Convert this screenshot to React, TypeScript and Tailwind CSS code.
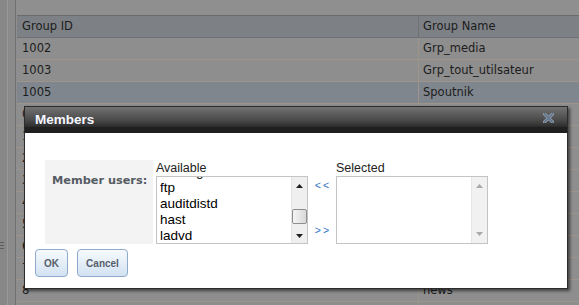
import React from "react";

const rows: { id: string; name: string; hl?: boolean }[] = [
  { id: "1002", name: "Grp_media" },
  { id: "1003", name: "Grp_tout_utilsateur" },
  { id: "1005", name: "Spoutnik", hl: true },
  { id: "0", name: "wheel" },
  { id: "1", name: "daemon" },
  { id: "2", name: "kmem" },
  { id: "3", name: "sys" },
  { id: "4", name: "tty" },
  { id: "5", name: "operator" },
  { id: "6", name: "mail" },
  { id: "7", name: "bin" },
  { id: "8", name: "news" },
  { id: "9", name: "man" },
];

function Tri({ up, color }: { up?: boolean; color: string }) {
  return (
    <svg width="7" height="4" viewBox="0 0 7 4" className="block">
      {up ? (
        <polygon points="0,4 7,4 3.5,0" fill={color} />
      ) : (
        <polygon points="0,0 7,0 3.5,4" fill={color} />
      )}
    </svg>
  );
}

export default function App() {
  const tableFont = { fontFamily: '"DejaVu Sans", Verdana, sans-serif' };
  return (
    <div className="relative w-[579px] h-[305px] overflow-hidden bg-[#8f8f8f] flex">
      {/* left strip */}
      <div className="flex h-full shrink-0">
        <div className="w-[7px] h-full bg-[#878787] flex flex-col">
          <div className="mt-[242px] flex flex-col gap-[2px] w-[4px]">
            <div className="h-px bg-[#5e5e5e]" />
            <div className="h-px bg-[#5e5e5e]" />
            <div className="h-px bg-[#5e5e5e]" />
          </div>
        </div>
        <div className="w-px h-full bg-[#9a9a9a]" />
        <div className="w-[7px] h-full bg-[#8a8a8a]" />
        <div className="w-px h-full bg-[#707070]" />
        <div className="w-px h-full bg-[#8e8e8e]" />
      </div>

      {/* main */}
      <div className="flex-1 flex flex-col min-w-0" style={tableFont}>
        <div className="h-[15px] shrink-0 bg-[#8f8f8f]" />
        <div className="border-t border-[#6c6c6c] flex flex-col text-[11.5px] text-[#1c1c1c]">
          <div className="flex h-[22px] bg-[#7d8186] border-b border-[#6d7075]">
            <div className="w-[401px] shrink-0 pl-[5px] leading-[21px]">Group ID</div>
            <div className="flex-1 border-l border-[#6d7075] pl-[4px] leading-[21px]">Group Name</div>
          </div>
          {rows.map((r) => (
            <div
              key={r.id}
              className={`flex h-[22px] shrink-0 border-b border-[#9d958b] ${r.hl ? "bg-[#80868d]" : "bg-[#8e8e8e]"}`}
            >
              <div className="w-[401px] shrink-0 pl-[5px] leading-[21px]">{r.id}</div>
              <div className="flex-1 border-l border-[#9d958b] pl-[4px] leading-[21px]">{r.name}</div>
            </div>
          ))}
        </div>
      </div>

      {/* dialog */}
      <div className="absolute left-[24px] top-[106px] w-[544px] h-[183px] border border-[#2b2b2b] bg-white shadow-[2px_2px_3px_rgba(0,0,0,0.55)] flex flex-col">
        <div className="h-[26px] shrink-0 flex items-center justify-between pl-[10px] pr-[13px] bg-[linear-gradient(to_bottom,#727272_0%,#4a4a4a_50%,#2c2c2c_76%,#1f1f1f_78%,#1f1f1f_100%)]">
          <span
            className="text-[#f4f7ff] font-bold text-[13.5px] leading-[15px] -mt-[2px]"
            style={{ fontFamily: '"Liberation Sans", Arial, sans-serif' }}
          >
            Members
          </span>
          <svg width="11" height="10" viewBox="0 0 11 10" className="-mt-[5px]">
            <path d="M1.5 1 L9.5 9 M9.5 1 L1.5 9" stroke="#9aa6b4" strokeWidth="3.2" strokeLinecap="square" />
            <path d="M1.5 1 L9.5 9 M9.5 1 L1.5 9" stroke="#62768e" strokeWidth="1.8" strokeLinecap="square" />
          </svg>
        </div>

        <div className="flex-1 flex flex-col pt-[27px]">
          <div className="flex ml-[20px] h-[84px]">
            <div
              className="w-[108px] shrink-0 bg-[#f3f3f3] pl-[7px] pt-[13px] text-[11.3px] font-bold text-[#555b63]"
              style={tableFont}
            >
              Member users:
            </div>
            <div className="ml-[3px] flex flex-col" style={{ fontFamily: '"Liberation Sans", Arial, sans-serif' }}>
              <div className="h-[16px] text-[12.5px] leading-[16px] text-[#222]">Available</div>
              <div className="w-[152px] h-[68px] border border-[#c4c4c4] flex overflow-hidden">
                <div className="flex-1 overflow-hidden pl-[3px] text-[13.5px] leading-[16px] text-black">
                  <div className="-mt-[13px]">
                    <div>bindlog</div>
                    <div>ftp</div>
                    <div>auditdistd</div>
                    <div>hast</div>
                    <div>ladvd</div>
                  </div>
                </div>
                <div className="w-[16px] shrink-0 bg-[#efefef] border-l border-[#e4e4e4] flex flex-col items-center">
                  <div className="mt-[7px]">
                    <Tri up color="#202020" />
                  </div>
                  <div className="mt-[21px] w-[15px] h-[15px] rounded-[2px] border border-[#8e8e8e] bg-[linear-gradient(to_right,#f4f4f4,#d9d9d9)]" />
                  <div className="mt-[10px]">
                    <Tri color="#202020" />
                  </div>
                </div>
              </div>
            </div>
            <div className="w-[28px] shrink-0 flex flex-col items-center pt-[20px] text-[10.5px] leading-[10px] text-[#3173c4] tracking-[2px]" style={{ fontFamily: '"Liberation Sans", Arial, sans-serif' }}>
              <span className="pl-[2px]">&lt;&lt;</span>
              <span className="mt-[35px] pl-[2px]">&gt;&gt;</span>
            </div>
            <div className="flex flex-col" style={{ fontFamily: '"Liberation Sans", Arial, sans-serif' }}>
              <div className="h-[16px] text-[12.5px] leading-[16px] text-[#222]">Selected</div>
              <div className="w-[152px] h-[68px] border border-[#c4c4c4] flex overflow-hidden">
                <div className="flex-1" />
                <div className="w-[16px] shrink-0 bg-[#f1f1f1] border-l border-[#e6e6e6] flex flex-col items-center justify-between py-[7px]">
                  <Tri up color="#a8a8a8" />
                  <Tri color="#a8a8a8" />
                </div>
              </div>
            </div>
          </div>

          <div className="flex ml-[10px] mt-[5px] gap-[9px]" style={{ fontFamily: '"Liberation Sans", Arial, sans-serif' }}>
            <button className="w-[33px] h-[28px] rounded-[4px] border border-[#8eaacb] bg-[linear-gradient(to_bottom,#f7fafd,#d2e2f2)] text-[10px] font-bold text-[#56606c]">
              OK
            </button>
            <button className="w-[51px] h-[28px] rounded-[4px] border border-[#8eaacb] bg-[linear-gradient(to_bottom,#f7fafd,#d2e2f2)] text-[10px] font-bold text-[#56606c]">
              Cancel
            </button>
          </div>
        </div>
      </div>
    </div>
  );
}
